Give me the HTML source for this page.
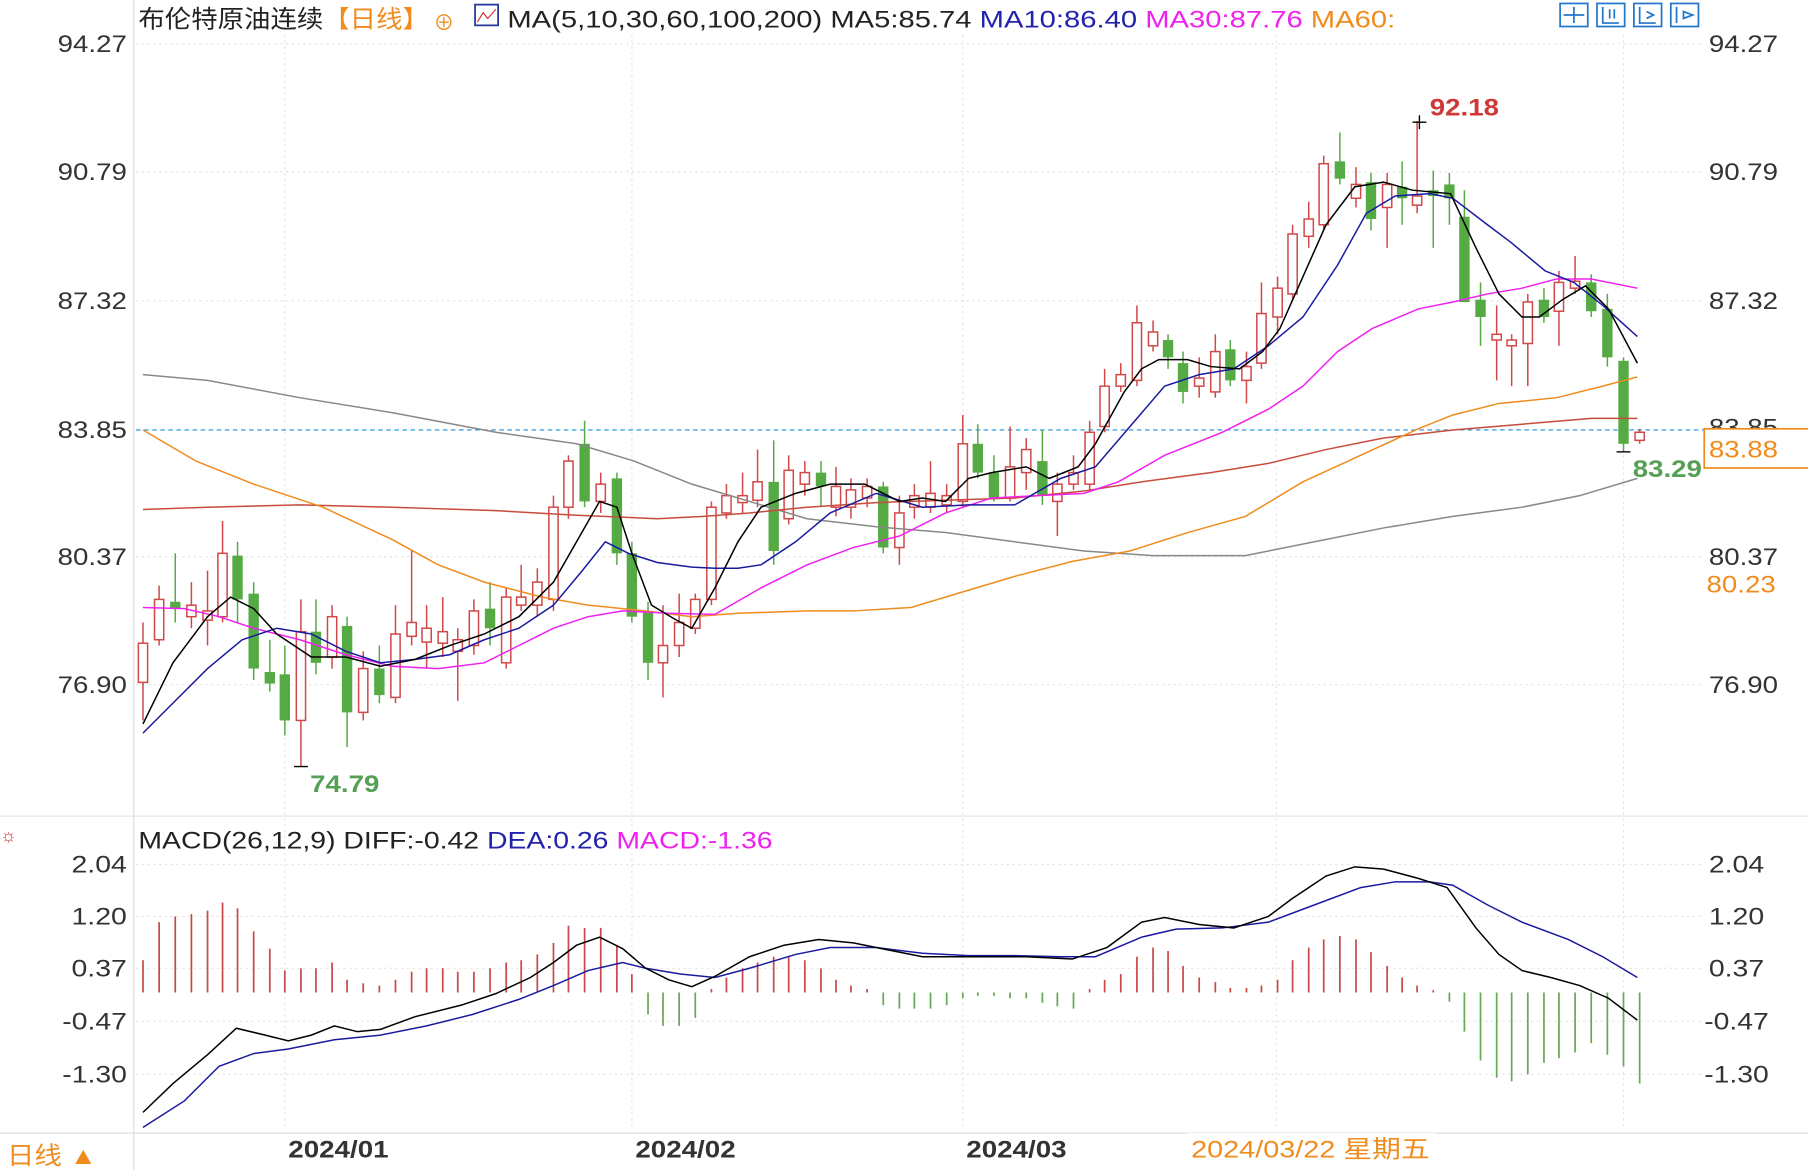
<!DOCTYPE html>
<html><head><meta charset="utf-8"><style>
html,body{margin:0;padding:0;background:#fff;width:1808px;height:1170px;overflow:hidden}
svg{display:block}
text{font-family:"Liberation Sans","Noto Sans CJK SC",sans-serif}
</style></head><body>
<svg id="s" width="1808" height="1170" viewBox="0 0 1568 1015" preserveAspectRatio="none" xmlns="http://www.w3.org/2000/svg">
<rect width="1568" height="1015" fill="#fff"/>
<g stroke="#e4e4e4" stroke-dasharray="2,3" stroke-width="1">
<line x1="118" y1="38" x2="1478" y2="38"/><line x1="118" y1="149" x2="1478" y2="149"/><line x1="118" y1="261" x2="1478" y2="261"/><line x1="118" y1="483" x2="1478" y2="483"/><line x1="118" y1="594" x2="1478" y2="594"/>
<line x1="247" y1="30" x2="247" y2="980"/><line x1="548" y1="30" x2="548" y2="980"/><line x1="835" y1="30" x2="835" y2="980"/><line x1="1107" y1="30" x2="1107" y2="980"/><line x1="1408" y1="30" x2="1408" y2="980"/>
<line x1="118" y1="750" x2="1478" y2="750"/><line x1="118" y1="795" x2="1478" y2="795"/><line x1="118" y1="840" x2="1478" y2="840"/><line x1="118" y1="886" x2="1478" y2="886"/><line x1="118" y1="932" x2="1478" y2="932"/>
</g>
<line x1="116" y1="0" x2="116" y2="1015" stroke="#ddd"/>
<line x1="0" y1="708" x2="1568" y2="708" stroke="#e6e6e6"/>
<line x1="0" y1="983" x2="1568" y2="983" stroke="#ddd"/>
<line x1="118" y1="373" x2="1478" y2="373" stroke="#1a8fd8" stroke-dasharray="4,3"/>
<g id="candles"></g>
<g fill="none" stroke-width="1.3">
<polyline stroke="#888" points="124,325 180,330 260,345 340,358 430,375 500,385 550,400 600,420 650,435 700,450 760,457 820,462 880,470 940,478 1000,482 1080,482 1140,470 1200,458 1260,448 1320,440 1370,430 1420,415"/>
<polyline stroke="#c84b3c" points="124,442 180,440 260,438 340,440 430,443 500,447 570,450 610,448 650,445 700,440 760,436 820,434 880,432 940,426 990,418 1050,410 1100,402 1150,390 1200,380 1260,373 1320,368 1380,363 1420,363"/>
<polyline stroke="#f08c1e" points="124,373 170,400 220,420 280,440 340,468 380,490 420,505 470,518 510,525 560,530 600,535 640,532 700,530 740,530 790,527 830,515 880,500 930,487 980,478 1030,462 1080,448 1130,418 1180,395 1230,372 1260,360 1300,350 1350,345 1390,335 1420,327"/>
<polyline stroke="#f020f0" points="124,527 160,528 190,535 220,545 260,555 300,568 340,578 380,580 420,575 450,560 480,545 510,535 540,530 580,532 620,533 660,510 700,490 740,475 780,465 820,445 860,432 900,430 940,428 970,418 1010,395 1060,375 1100,355 1130,335 1160,305 1190,285 1230,268 1260,262 1290,255 1320,250 1350,242 1380,242 1420,250"/>
<polyline stroke="#1a1aa0" points="124,636 150,610 180,580 210,555 240,545 270,550 300,565 330,575 360,572 390,568 420,555 450,545 480,525 505,495 525,470 545,480 570,488 600,492 620,493 640,493 660,490 690,470 720,445 760,428 800,440 840,438 880,438 920,415 950,405 980,370 1010,335 1040,325 1070,320 1100,300 1130,275 1160,230 1185,185 1210,170 1240,168 1260,172 1290,195 1310,210 1340,235 1365,245 1390,265 1420,292"/>
<polyline stroke="#000" points="124,628 150,575 180,535 200,518 220,528 240,550 270,570 300,570 330,578 360,572 390,560 420,550 450,535 480,505 500,470 520,435 535,440 548,480 565,525 585,537 600,545 620,510 640,470 660,440 690,428 720,420 750,420 780,435 800,432 820,435 840,415 860,410 890,405 910,415 935,405 950,385 975,340 990,320 1005,312 1030,312 1050,318 1075,320 1095,305 1110,285 1130,240 1150,195 1175,162 1200,158 1225,165 1258,168 1280,215 1300,255 1320,275 1335,275 1355,260 1375,248 1395,268 1420,315"/>
</g>
<g stroke="#000" stroke-width="1.2"><line x1="1225" y1="106" x2="1237" y2="106"/><line x1="1231" y1="100" x2="1231" y2="112"/><line x1="255" y1="665" x2="267" y2="665"/><line x1="1402" y1="392" x2="1414" y2="392"/></g>
<text x="1240" y="100" fill="#d03838" font-size="21" font-weight="bold" textLength="60" lengthAdjust="spacingAndGlyphs">92.18</text>
<text x="269" y="687" fill="#55a055" font-size="21" font-weight="bold" textLength="60" lengthAdjust="spacingAndGlyphs">74.79</text>
<text x="1416" y="414" fill="#55a055" font-size="21" font-weight="bold" textLength="60" lengthAdjust="spacingAndGlyphs">83.29</text>
<g font-size="21" fill="#333">
<text x="50" y="45" textLength="60" lengthAdjust="spacingAndGlyphs">94.27</text><text x="50" y="156" textLength="60" lengthAdjust="spacingAndGlyphs">90.79</text><text x="50" y="268" textLength="60" lengthAdjust="spacingAndGlyphs">87.32</text><text x="50" y="380" textLength="60" lengthAdjust="spacingAndGlyphs">83.85</text><text x="50" y="490" textLength="60" lengthAdjust="spacingAndGlyphs">80.37</text><text x="50" y="601" textLength="60" lengthAdjust="spacingAndGlyphs">76.90</text>
<text x="1482" y="45" textLength="60" lengthAdjust="spacingAndGlyphs">94.27</text><text x="1482" y="156" textLength="60" lengthAdjust="spacingAndGlyphs">90.79</text><text x="1482" y="268" textLength="60" lengthAdjust="spacingAndGlyphs">87.32</text><text x="1482" y="378" textLength="60" lengthAdjust="spacingAndGlyphs">83.85</text><text x="1482" y="490" textLength="60" lengthAdjust="spacingAndGlyphs">80.37</text><text x="1482" y="601" textLength="60" lengthAdjust="spacingAndGlyphs">76.90</text>
</g>
<rect x="1478" y="372" width="92" height="34" fill="#fff" stroke="#f08c1e" stroke-width="1.5"/>
<text x="1482" y="397" fill="#f08c1e" font-size="21" textLength="60" lengthAdjust="spacingAndGlyphs">83.88</text>
<rect x="1478" y="492" width="90" height="28" fill="#fff"/>
<text x="1480" y="514" fill="#f08c1e" font-size="21" textLength="60" lengthAdjust="spacingAndGlyphs">80.23</text>
<text x="120" y="24" font-size="21" fill="#222" textLength="252" lengthAdjust="spacingAndGlyphs">布伦特原油连续<tspan fill="#f08c1e">【日线】</tspan></text>
<text x="376" y="26" font-size="18" fill="#f08c1e">⊕</text>
<rect x="412" y="4" width="20" height="18" fill="none" stroke="#223399" stroke-width="1.5"/><polyline points="414,19 419,11 423,16 430,8" fill="none" stroke="#c33"/>
<text x="440" y="24" font-size="21" fill="#222" textLength="770" lengthAdjust="spacingAndGlyphs">MA(5,10,30,60,100,200) MA5:85.74 <tspan fill="#2222aa">MA10:86.40</tspan> <tspan fill="#ee22ee">MA30:87.76</tspan> <tspan fill="#f08c1e">MA60:</tspan></text>
<g fill="none" stroke="#2277cc" stroke-width="1.5"><rect x="1353" y="3" width="24" height="20"/><rect x="1385" y="3" width="24" height="20"/><rect x="1417" y="3" width="24" height="20"/><rect x="1449" y="3" width="24" height="20"/>
<path d="M1365 6v14M1356 13h18M1390 6v14h14M1396 8v8M1400 8v8M1422 6v14h14M1428 10l6 3-6 3M1454 6v14M1460 10l8 3-8 3z"/></g>
<text x="120" y="736" font-size="21" fill="#222" textLength="550" lengthAdjust="spacingAndGlyphs">MACD(26,12,9) DIFF:-0.42 <tspan fill="#2222aa">DEA:0.26</tspan> <tspan fill="#ee22ee">MACD:-1.36</tspan></text>
<text x="0" y="730" font-size="16" fill="#c33">☼</text>
<g id="hist"></g>
<g fill="none" stroke-width="1.3">
<polyline stroke="#1a1aa0" points="124,978 160,955 190,925 220,914 250,910 290,902 330,898 370,890 410,880 450,867 480,855 510,842 540,835 560,840 590,845 620,848 650,840 690,828 720,822 760,822 800,827 840,829 880,829 920,830 950,830 990,813 1020,806 1060,805 1100,800 1140,785 1180,770 1210,765 1240,765 1260,768 1290,785 1320,800 1360,815 1390,830 1420,848"/>
<polyline stroke="#000" points="124,965 150,940 180,915 205,892 230,898 250,903 270,898 290,890 310,895 330,893 360,882 400,872 430,862 460,848 480,835 500,820 520,813 540,823 560,840 580,850 600,856 620,847 650,830 680,820 710,815 740,818 770,824 800,830 830,830 860,830 890,830 930,832 960,822 990,800 1010,796 1040,802 1070,805 1100,795 1120,780 1150,760 1175,752 1200,754 1230,762 1255,770 1280,805 1300,828 1320,842 1345,848 1370,855 1395,866 1420,885"/>
</g>
<g font-size="21" fill="#333">
<text x="62" y="757" textLength="48" lengthAdjust="spacingAndGlyphs">2.04</text><text x="62" y="802" textLength="48" lengthAdjust="spacingAndGlyphs">1.20</text><text x="62" y="847" textLength="48" lengthAdjust="spacingAndGlyphs">0.37</text><text x="54" y="893" textLength="56" lengthAdjust="spacingAndGlyphs">-0.47</text><text x="54" y="939" textLength="56" lengthAdjust="spacingAndGlyphs">-1.30</text>
<text x="1482" y="757" textLength="48" lengthAdjust="spacingAndGlyphs">2.04</text><text x="1482" y="802" textLength="48" lengthAdjust="spacingAndGlyphs">1.20</text><text x="1482" y="847" textLength="48" lengthAdjust="spacingAndGlyphs">0.37</text><text x="1478" y="893" textLength="56" lengthAdjust="spacingAndGlyphs">-0.47</text><text x="1478" y="939" textLength="56" lengthAdjust="spacingAndGlyphs">-1.30</text>
</g>
<g font-size="21" font-weight="bold" fill="#333"><text x="250" y="1004" textLength="87" lengthAdjust="spacingAndGlyphs">2024/01</text><text x="551" y="1004" textLength="87" lengthAdjust="spacingAndGlyphs">2024/02</text><text x="838" y="1004" textLength="87" lengthAdjust="spacingAndGlyphs">2024/03</text></g>
<rect x="1030" y="983" width="215" height="30" fill="#fff"/>
<text x="1033" y="1004" font-size="21" fill="#f08c1e" textLength="207" lengthAdjust="spacingAndGlyphs">2024/03/22 星期五</text>
<text x="6" y="1010" font-size="21" fill="#f08c1e" textLength="78" lengthAdjust="spacingAndGlyphs">日线 ▲</text>
</svg>
<script>
var C=[[124,'R',558,592,540,625],[138,'R',520,555,508,560],[152,'G',522,528,480,540],[166,'R',525,535,505,545],[180,'R',530,538,495,560],[193,'R',480,535,452,540],[206,'G',482,520,470,540],[220,'G',515,580,505,590],[234,'G',583,593,555,600],[247,'G',585,625,560,638],[261,'R',548,625,520,665],[274,'G',548,575,520,585],[288,'R',535,570,525,580],[301,'G',543,618,535,648],[315,'R',580,618,565,625],[329,'G',580,603,560,610],[343,'R',550,605,525,610],[357,'R',540,552,478,560],[370,'R',545,557,525,580],[384,'R',548,558,518,570],[397,'R',555,565,545,608],[411,'R',530,560,520,568],[425,'G',528,545,505,560],[439,'R',518,575,510,580],[452,'R',518,525,490,530],[466,'R',505,525,493,535],[480,'R',440,520,430,530],[493,'R',400,440,395,450],[507,'G',385,435,365,440],[521,'R',420,435,410,445],[535,'G',415,480,410,490],[548,'G',480,535,470,540],[562,'G',530,575,522,590],[575,'R',560,575,525,605],[589,'R',540,560,515,570],[603,'R',520,545,515,550],[617,'R',440,520,435,525],[630,'R',430,445,420,450],[644,'R',430,436,410,445],[657,'R',418,434,390,440],[671,'G',418,478,382,490],[684,'R',408,450,395,455],[698,'R',410,420,400,430],[712,'G',410,422,400,440],[725,'R',422,440,405,448],[738,'R',425,440,415,450],[752,'R',422,432,415,440],[766,'G',422,475,418,480],[780,'R',445,475,430,490],[793,'R',430,440,420,450],[807,'R',428,440,400,445],[821,'R',430,438,420,445],[835,'R',385,435,360,440],[848,'G',385,410,368,415],[862,'G',410,432,395,435],[876,'R',405,432,370,435],[890,'R',390,410,380,425],[904,'G',400,430,373,438],[917,'R',420,435,410,465],[931,'R',410,420,395,425],[945,'R',375,420,365,425],[958,'R',335,370,320,375],[972,'R',325,335,315,340],[986,'R',280,330,265,335],[1000,'R',288,300,278,305],[1013,'G',295,310,290,320],[1026,'G',315,340,305,350],[1040,'R',328,335,310,345],[1054,'R',305,340,290,345],[1067,'G',303,330,295,335],[1081,'R',318,330,305,350],[1094,'R',272,315,245,320],[1108,'R',250,275,240,290],[1121,'R',203,255,195,260],[1135,'R',190,205,175,215],[1148,'R',142,195,135,200],[1162,'G',140,155,115,160],[1176,'R',160,172,145,180],[1189,'G',158,190,150,200],[1203,'R',160,180,150,215],[1216,'G',162,172,140,195],[1229,'R',170,178,105,185],[1243,'G',165,170,148,215],[1257,'G',160,172,150,195],[1270,'G',188,262,165,262],[1284,'G',260,275,245,300],[1298,'R',290,295,265,330],[1311,'R',295,300,290,335],[1325,'R',262,298,255,335],[1339,'G',260,275,250,280],[1352,'R',245,270,235,300],[1366,'R',244,250,222,255],[1380,'G',245,270,238,275],[1394,'G',268,310,255,318],[1408,'G',313,385,310,392],[1422,'R',375,382,372,385]];
var g=document.getElementById('candles'),s='';
C.forEach(function(c){var x=c[0],col=c[1]=='R'?'#d04848':'#55aa44';
s+='<line x1="'+x+'" y1="'+c[4]+'" x2="'+x+'" y2="'+c[5]+'" stroke="'+col+'" stroke-width="1.3"/>';
if(c[1]=='R')s+='<rect x="'+(x-4)+'" y="'+c[2]+'" width="8" height="'+Math.max(1,c[3]-c[2])+'" fill="#fff" stroke="'+col+'" stroke-width="1.3"/>';
else s+='<rect x="'+(x-4.5)+'" y="'+c[2]+'" width="9" height="'+Math.max(1,c[3]-c[2])+'" fill="'+col+'"/>';});
g.innerHTML=s;
var H=[[124,833],[138,800],[152,795],[166,793],[180,790],[193,783],[206,788],[220,808],[234,823],[247,842],[261,840],[274,840],[288,835],[301,850],[315,853],[329,855],[343,850],[357,843],[370,840],[384,840],[397,843],[411,843],[425,840],[439,835],[452,833],[466,828],[480,818],[493,803],[507,805],[521,805],[535,820],[548,845],[562,880],[575,890],[589,890],[603,883],[617,858],[630,848],[644,840],[657,835],[671,830],[684,830],[698,833],[712,840],[725,850],[738,855],[752,858],[766,872],[780,875],[793,875],[807,875],[821,872],[835,866],[848,864],[862,864],[876,866],[890,866],[904,870],[917,873],[931,875],[945,858],[958,850],[972,845],[986,830],[1000,822],[1013,825],[1026,838],[1040,848],[1054,852],[1067,857],[1081,857],[1094,855],[1108,850],[1121,833],[1135,822],[1148,815],[1162,812],[1176,815],[1189,826],[1203,838],[1216,848],[1229,855],[1243,859],[1257,869],[1270,895],[1284,920],[1298,935],[1311,938],[1325,932],[1339,922],[1352,918],[1366,913],[1380,905],[1394,915],[1408,925],[1422,940]];
var h='';H.forEach(function(b){var col=b[1]<861?'#c84b4b':'#66aa55';h+='<line x1="'+b[0]+'" y1="861" x2="'+b[0]+'" y2="'+b[1]+'" stroke="'+col+'" stroke-width="1.5"/>';});
document.getElementById('hist').innerHTML=h;
</script>
</body></html>
